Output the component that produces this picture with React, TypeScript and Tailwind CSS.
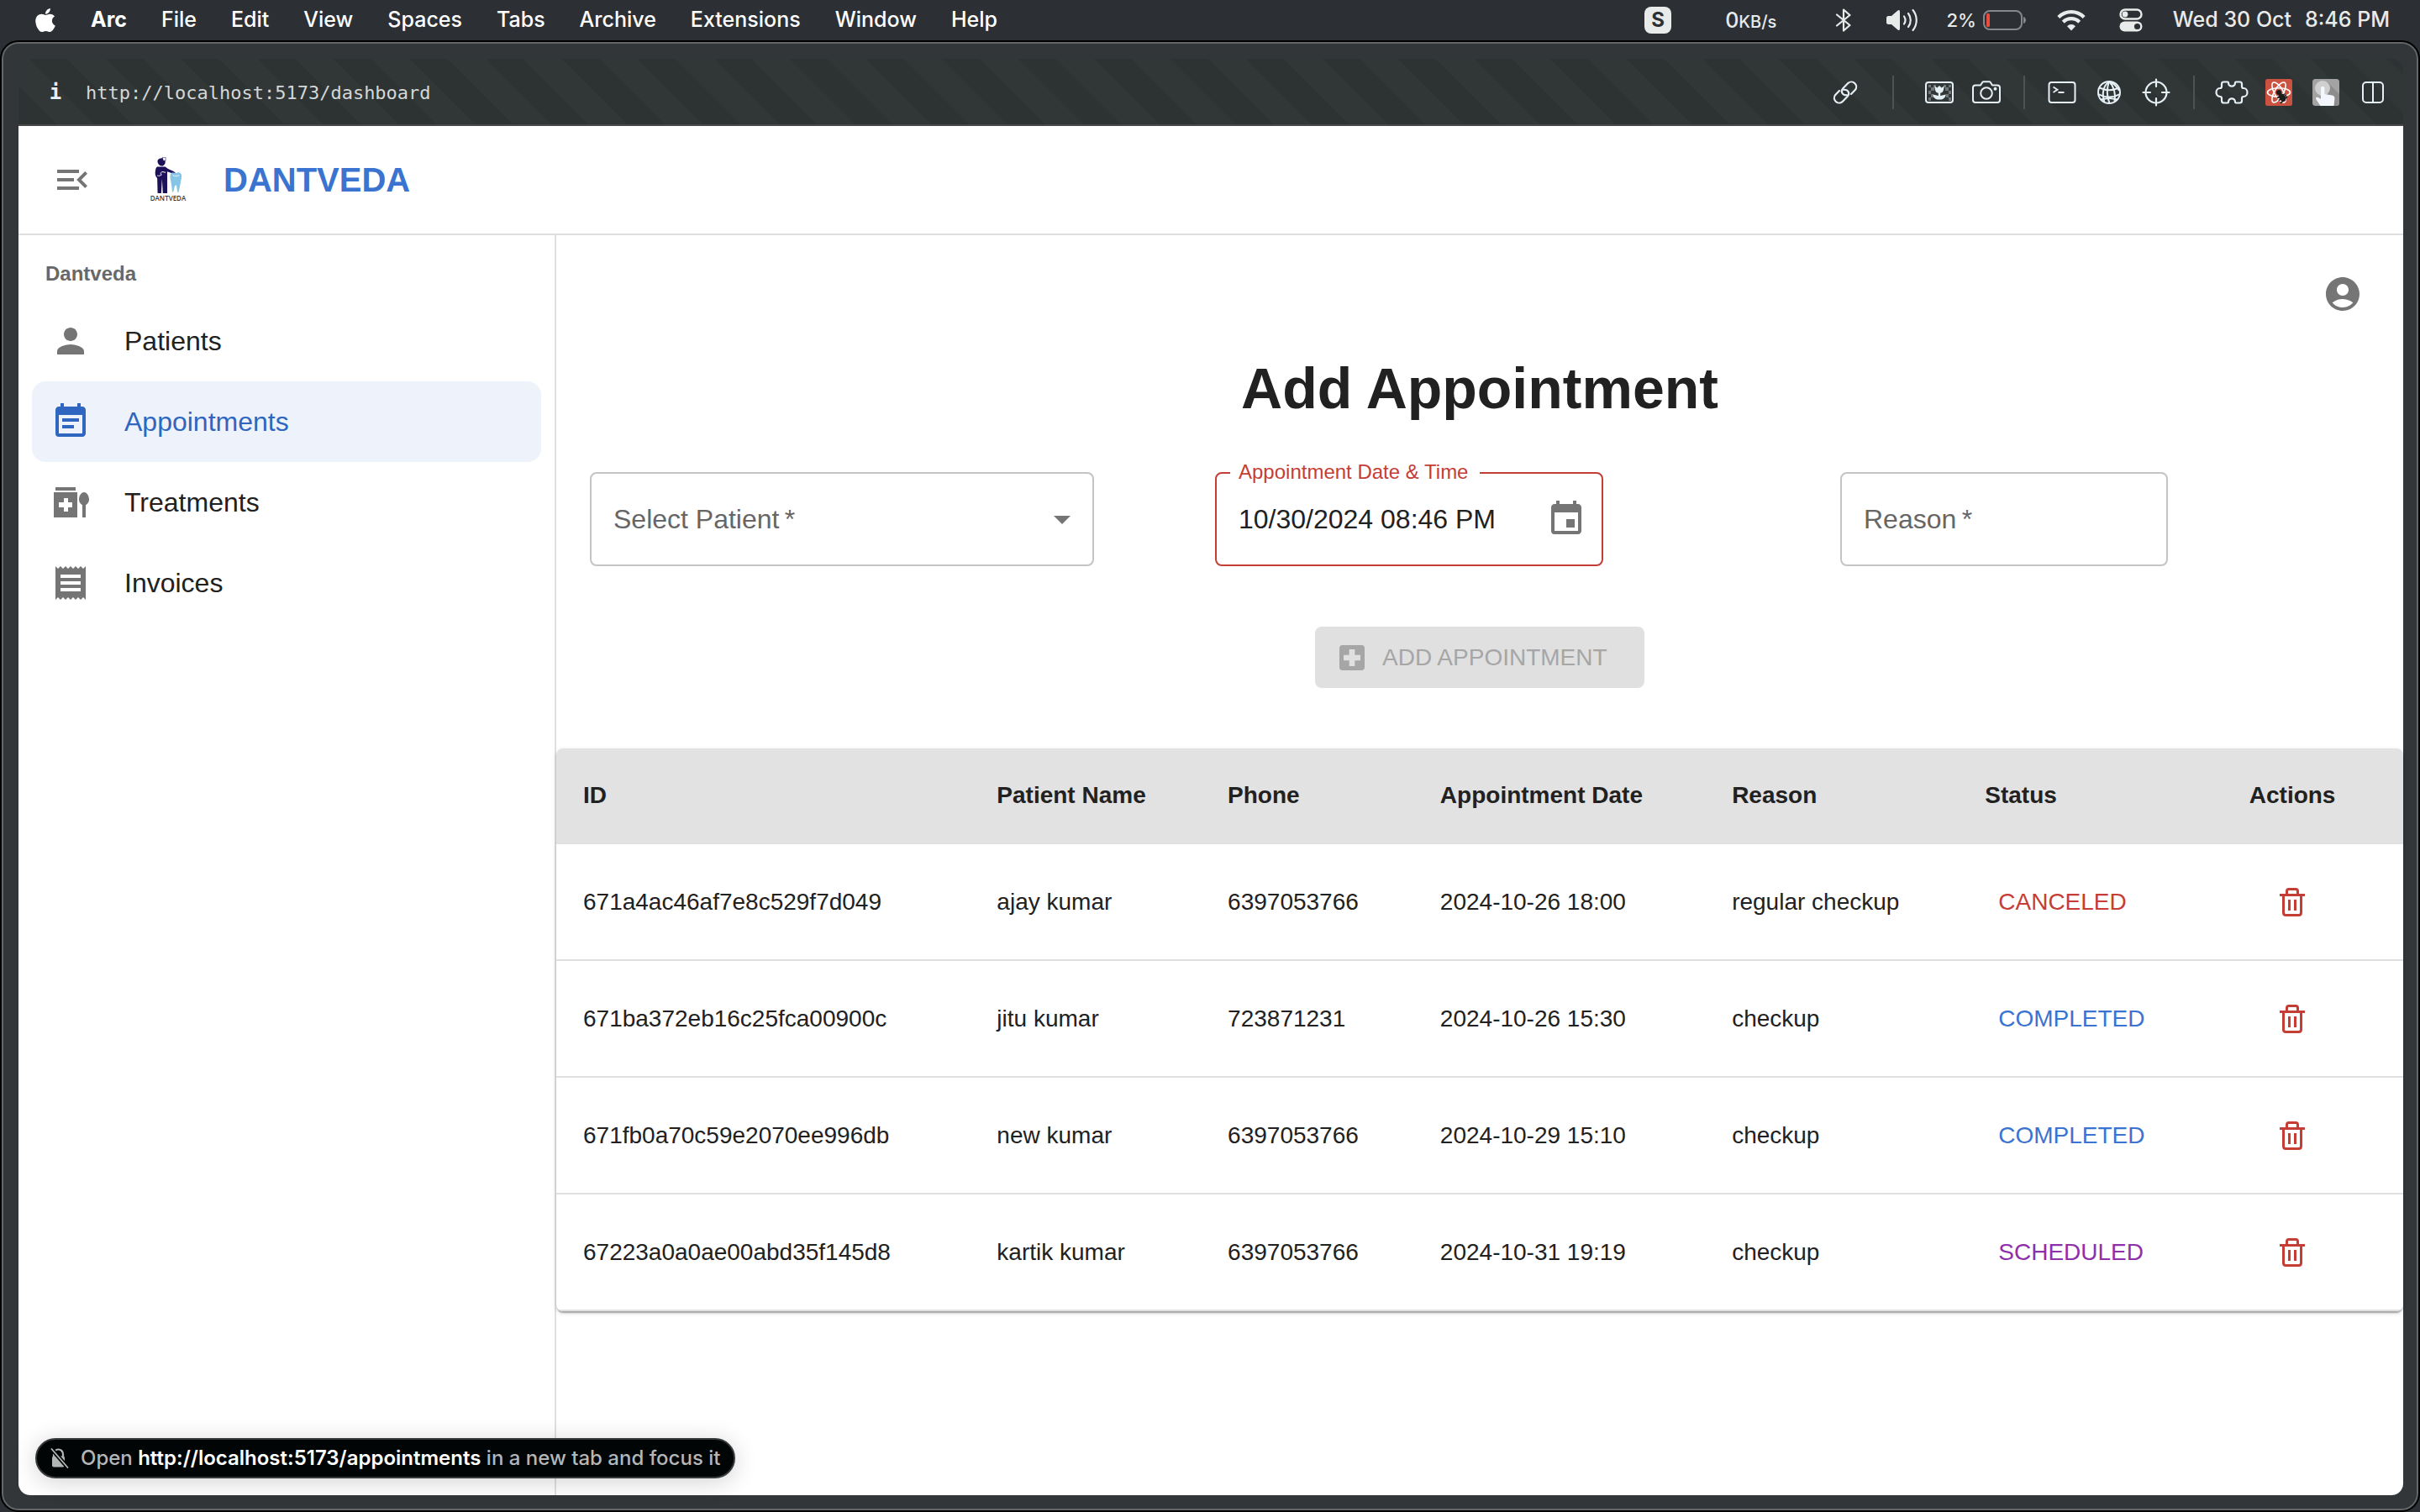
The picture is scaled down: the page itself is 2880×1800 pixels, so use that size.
import React from "react";
import { MdMenuOpen, MdPerson, MdEventNote, MdReceipt, MdEvent, MdAccountCircle, MdArrowDropDown, MdLocalHospital } from "react-icons/md";
import { FaApple } from "react-icons/fa";

const menus = ["File", "Edit", "View", "Spaces", "Tabs", "Archive", "Extensions", "Window", "Help"];

type Status = "CANCELED" | "COMPLETED" | "SCHEDULED";

const statusColor: Record<Status, string> = {
  CANCELED: "text-[#c43e36]",
  COMPLETED: "text-[#3a74d0]",
  SCHEDULED: "text-[#8e30ac]",
};

const rows: { id: string; name: string; phone: string; date: string; reason: string; status: Status }[] = [
  { id: "671a4ac46af7e8c529f7d049", name: "ajay kumar", phone: "6397053766", date: "2024-10-26 18:00", reason: "regular checkup", status: "CANCELED" },
  { id: "671ba372eb16c25fca00900c", name: "jitu kumar", phone: "723871231", date: "2024-10-26 15:30", reason: "checkup", status: "COMPLETED" },
  { id: "671fb0a70c59e2070ee996db", name: "new kumar", phone: "6397053766", date: "2024-10-29 15:10", reason: "checkup", status: "COMPLETED" },
  { id: "67223a0a0ae00abd35f145d8", name: "kartik kumar", phone: "6397053766", date: "2024-10-31 19:19", reason: "checkup", status: "SCHEDULED" },
];

function BluetoothIcon() {
  return (
    <svg width="20" height="30" viewBox="0 0 20 30" fill="none" stroke="currentColor" strokeWidth="2.2" strokeLinejoin="round" strokeLinecap="round" aria-hidden="true">
      <path d="M2 8.5 17.5 21 10 27.5V2.5L17.5 9 2 21.5" />
    </svg>
  );
}

function VolumeIcon() {
  return (
    <svg width="40" height="28" viewBox="0 0 40 28" aria-hidden="true">
      <path d="M1 11.5Q1 9 3.500 9H7L14.500 2.600Q17 1 17 4V24Q17 27 14.500 25.400L7 19H3.500Q1 19 1 16.500Z" fill="currentColor" />
      <g fill="none" stroke="currentColor" strokeWidth="2.2" strokeLinecap="round">
        <path d="M22 9.500a8 8 0 0 1 0 9" />
        <path d="M27 6a13 13 0 0 1 0 16" />
        <path d="M32.500 2a19 19 0 0 1 0 24" />
      </g>
    </svg>
  );
}

function BatteryIcon() {
  return (
    <svg width="52" height="24" viewBox="0 0 52 24" aria-hidden="true">
      <rect x="1" y="1" width="45" height="22" rx="7" fill="none" stroke="#85888b" strokeWidth="2" />
      <rect x="4" y="4" width="4" height="16" rx="1.500" fill="#ea4b3d" />
      <path d="M48 8c4 1 4 7 0 8z" fill="#85888b" />
    </svg>
  );
}

function WifiIcon() {
  return (
    <svg width="34" height="26" viewBox="0 0 34 26" aria-hidden="true">
      <g fill="none" stroke="currentColor" strokeWidth="4.200">
        <path d="M1.800 9.500a21.500 21.500 0 0 1 30.400 0" />
        <path d="M7.300 15.200a13.700 13.700 0 0 1 19.400 0" />
      </g>
      <path d="M17 25.500l-5-5.300a7 7 0 0 1 10 0z" fill="currentColor" />
    </svg>
  );
}

function ControlCenterIcon() {
  return (
    <svg width="28" height="28" viewBox="0 0 28 28" aria-hidden="true">
      <rect x="1.500" y="1.500" width="25" height="11" rx="5.500" fill="none" stroke="currentColor" strokeWidth="2.400" />
      <circle cx="7" cy="7" r="3.400" fill="currentColor" />
      <rect x="0.500" y="15.500" width="27" height="12" rx="6" fill="currentColor" />
      <circle cx="21.500" cy="21.500" r="3.600" fill="#2c3034" />
    </svg>
  );
}

function LinkIcon() {
  return (
    <svg width="32" height="32" viewBox="0 0 32 32" fill="none" stroke="currentColor" strokeWidth="2.200" strokeLinecap="round" aria-hidden="true">
      <path d="M17.800 19.200C12.500 19.600 10 14.800 13.300 11.200L19.500 4.800a5.900 5.900 0 0 1 8.300 8.300L23 18" />
      <path d="M14.200 12.800C19.500 12.400 22 17.200 18.700 20.800L12.500 27.200a5.900 5.900 0 0 1-8.300-8.300L9 14" />
    </svg>
  );
}

function CaptureIcon() {
  return (
    <svg width="34" height="28" viewBox="0 0 34 28" aria-hidden="true">
      <rect x="1" y="2" width="32" height="24" rx="3" fill="none" stroke="currentColor" strokeWidth="2" />
      <g fill="currentColor" opacity=".35">
        <path d="M4 5h3v3H4zM10 5h3v3h-3zM22 5h3v3h-3zM7 8h4v4H7zM24 8h4v4h-4zM4 12h3v4H4zM28 12h3v4h-3zM7 16h3v4H7zM25 16h3v4h-3zM4 20h3v4H4zM28 20h3v4h-3zM28 5h3v3h-3z" />
      </g>
      <path d="M11.500 6.500l2.800 2 2.700-2.500 2.700 2.500 2.800-2c0 4.500-1 7.800-4.300 8.300V18l6.500-1.500c-.5 4-3.500 6-6.700 6h-2c-3.200 0-6.200-2-6.700-6L15.800 18v-3.200c-3.300-.5-4.300-3.800-4.300-8.300z" fill="currentColor" />
    </svg>
  );
}

function CameraIcon() {
  return (
    <svg width="34" height="28" viewBox="0 0 34 28" fill="none" stroke="currentColor" strokeWidth="2" strokeLinejoin="round" aria-hidden="true">
      <path d="M4 5.500h6l2.200-3.500q.5-.8 1.500-.8h6.600q1 0 1.500.8L24 5.500h6q3 0 3 3V23q0 3-3 3H4q-3 0-3-3V8.500q0-3 3-3z" />
      <circle cx="17" cy="15" r="6.800" />
      <circle cx="27.500" cy="9.800" r="1" fill="currentColor" />
    </svg>
  );
}

function TerminalIcon() {
  return (
    <svg width="34" height="28" viewBox="0 0 34 28" fill="none" stroke="currentColor" strokeWidth="2" aria-hidden="true">
      <rect x="1.500" y="2" width="31" height="24" rx="3" />
      <path d="M6.500 7.500l5 3.200-5 3.200M12.500 14h7" strokeWidth="1.800" />
    </svg>
  );
}

function GlobeIcon() {
  return (
    <svg width="30" height="30" viewBox="0 0 30 30" fill="none" stroke="currentColor" strokeWidth="2" aria-hidden="true">
      <circle cx="15" cy="15" r="13" />
      <path d="M15 2C8 7 6 17 9.500 26.500M15 2c-3 8-2.500 18 .5 26M15 2c6 6 8 14 6.500 24M15 2c7 2 10 8 12 11" />
      <path d="M3.500 9.500c8 3.500 16 3.500 23 0M2 17c8 4.500 18 4.500 26 0M5.500 23.500c6-2 13-2 19 0" />
    </svg>
  );
}

function CrosshairIcon() {
  return (
    <svg width="34" height="34" viewBox="0 0 34 34" fill="none" stroke="currentColor" strokeWidth="2.200" strokeLinecap="round" aria-hidden="true">
      <circle cx="17" cy="17" r="12.500" />
      <path d="M17 1.500v8.500M17 24v8.500M1.500 17H10M24 17h8.500" />
    </svg>
  );
}

function PuzzleIcon() {
  return (
    <svg width="40" height="28" viewBox="0 0 40 28" fill="none" stroke="currentColor" strokeWidth="2.200" strokeLinejoin="round" aria-hidden="true">
      <path d="M10.500 1.500H15q1 0 1 1c0 5.500 8 5.500 8 0q0-1 1-1h4.500Q32 1.500 32 4v3q0 2 2 2c6 0 6 10 0 10q-2 0-2 2v3q0 2.500-2.500 2.500H25q-1 0-1-1c0-5.500-8-5.500-8 0q0 1-1 1h-4.500Q8 26.500 8 24v-3q0-2-2-2C0 19 0 9 6 9q2 0 2-2V4q0-2.500 2.500-2.500z" />
    </svg>
  );
}

function ReactDevIcon() {
  return (
    <svg width="32" height="32" viewBox="0 0 32 32" aria-hidden="true">
      <rect width="32" height="32" rx="2.500" fill="#cb5140" />
      <g fill="none" stroke="#fff" strokeWidth="1.600">
        <ellipse cx="16" cy="16" rx="13.500" ry="5.200" />
        <ellipse cx="16" cy="16" rx="13.500" ry="5.200" transform="rotate(60 16 16)" />
        <ellipse cx="16" cy="16" rx="13.500" ry="5.200" transform="rotate(120 16 16)" />
      </g>
      <circle cx="16" cy="16" r="3" fill="#1c1c1c" />
      <g transform="rotate(-35 20 22)">
        <ellipse cx="20" cy="22" rx="3.500" ry="5.500" fill="#1c1c1c" />
        <path d="M14.500 19l11 1.500M14.500 22.500h11M14.500 26.500l11-2" stroke="#1c1c1c" strokeWidth="1.600" />
      </g>
    </svg>
  );
}

function TouchIcon() {
  return (
    <svg width="32" height="32" viewBox="0 0 32 32" aria-hidden="true">
      <rect width="32" height="32" rx="3.500" fill="#a3a3a3" />
      <path d="M18 4l14 14v10q0 4-4 4H14z" fill="#8d8d8d" />
      <circle cx="12" cy="11" r="9" fill="#cfcfcf" />
      <path d="M10 11q0-2.200 2.200-2.200T14.400 11v7l9 1.600q3.400.6 3 4L25.500 32H9.500l-5-7.600q-1.300-2.400 1-2.600 1.500 0 4.500 2.200z" fill="#f3f7fd" />
    </svg>
  );
}

function SplitIcon() {
  return (
    <svg width="26" height="28" viewBox="0 0 26 28" fill="none" stroke="currentColor" strokeWidth="2" aria-hidden="true">
      <rect x="1" y="2" width="24" height="24" rx="4" />
      <path d="M13 2v24" />
    </svg>
  );
}

function TreatmentsIcon() {
  return (
    <svg width="48" height="48" viewBox="0 0 24 24" fill="currentColor" aria-hidden="true">
      <path d="M3 3h12v2H3z" />
      <path fillRule="evenodd" d="M2 6h14v15H2zM8 9.500V12H5v3h3v2.500h2.500V15h2.500v-3h-2.500V9.500z" />
      <path d="M23 10.200C23 8.400 21.800 6 20 6s-3 2.400-3 4.200c0 1.500.8 2.700 2 3.400V21h2v-7.400c1.200-.7 2-1.900 2-3.400z" />
    </svg>
  );
}

function TrashIcon() {
  return (
    <svg width="30" height="34" viewBox="0 0 30 34" fill="none" stroke="currentColor" strokeWidth="3" aria-hidden="true">
      <path d="M8.500 7V4q0-2.500 2.500-2.500h8q2.500 0 2.500 2.500v3" />
      <path d="M0 8.500h30" />
      <path d="M4.500 9v20.500q0 3 3 3h15q3 0 3-3V9" />
      <path d="M11.500 14v13M18.500 14v13" />
    </svg>
  );
}

function LogoMark() {
  return (
    <svg width="42" height="44" viewBox="0 0 44 46" aria-hidden="true">
      <g fill="#1d1259">
        <path d="M9 6.500C8.500 3 10.500 1.500 13.500 1.500L15 .8l1.500 1.700c2 1 2.500 3 1.800 5.200-.6 2-2.400 3.300-4.300 3.300s-4.400-1.700-5-4.500z" />
        <path d="M8.500 12h10l3.500 2.600 7 3.200 2.500 2-1.500 1.300-9-3.200V45H15.500l-1-18-1 18H9l-.5-18.500C6 24 5.500 20 6.300 16.500 6.800 14 7 12.800 8.500 12z" />
      </g>
      <path d="M8.500 23c2 .8 4 .2 5.500-1.200l-1.500-1.300 2-2.300 4.500 1" fill="none" stroke="#fff" strokeWidth="1" />
      <path d="M15 .2h4v4.300h-3z" fill="#fff" stroke="#1d1259" strokeWidth=".6" />
      <path d="M26 20c2-1.300 4 0 5.500 0s4-1.800 6 0c2.300 2 1.500 6 .5 9.500-.8 5-1.800 10-3 14.500-1.200.8-1.500-1.500-1.800-4-.2-3-.6-5-1.600-5s-1.600 2-2.200 5c-.5 2.500-1 4.500-2.200 3.500-.6-5-.8-9.500-1.700-13.500-1-4-1.500-8 .5-10z" fill="#86c5e5" />
      <path d="M28 22.500c1.500 1.300 6 1.500 8 0" fill="none" stroke="#fff" strokeWidth=".9" />
    </svg>
  );
}

function UnsecuredIcon() {
  return (
    <svg width="22" height="24" viewBox="0 0 22 24" aria-hidden="true">
      <path d="M4 10V7a5.500 5.500 0 0 1 11 0v3" fill="none" stroke="currentColor" strokeWidth="2.200" />
      <rect x="2" y="9.500" width="15" height="13" rx="2" fill="currentColor" />
      <path d="M1.500 1l19 22" stroke="#020506" strokeWidth="5" />
      <path d="M1.500 1l19 22" stroke="currentColor" strokeWidth="1.800" strokeLinecap="round" />
    </svg>
  );
}

function ToolButton({ label, children }: { label: string; children: React.ReactNode }) {
  return (
    <button type="button" aria-label={label} className="flex h-14 w-14 items-center justify-center">
      {children}
    </button>
  );
}

function Divider() {
  return <span className="mx-4 h-10 w-0.5 bg-[#4d5254]" />;
}

function MenuBar() {
  return (
    <header className="flex h-[50px] shrink-0 items-center bg-[#2c3034] pl-10 pr-9 pb-0.5 font-['Inter',sans-serif] text-[25px] leading-8 text-white">
      <button type="button" aria-label="Apple menu" className="mr-10 flex">
        <FaApple className="h-8 w-7" />
      </button>
      <nav className="flex items-center gap-x-[41px] pb-0.5">
        <button type="button" className="font-bold">Arc</button>
        {menus.map((m) => (
          <button key={m} type="button" className="font-medium">{m}</button>
        ))}
      </nav>
      <div className="ml-auto flex items-center text-[#e9eaea]">
        <span className="flex h-8 w-8 items-center justify-center rounded-lg bg-[#e9eaea] text-2xl font-bold text-[#2c3034]">S</span>
        <span className="ml-16 font-medium">0<span className="text-xl">KB/s</span></span>
        <span className="ml-[70px]"><BluetoothIcon /></span>
        <span className="ml-10"><VolumeIcon /></span>
        <span className="ml-8 text-[22px] font-medium">2%</span>
        <span className="ml-2"><BatteryIcon /></span>
        <span className="ml-9"><WifiIcon /></span>
        <span className="ml-10"><ControlCenterIcon /></span>
        <span className="ml-9 pb-0.5 font-medium">Wed 30 Oct</span>
        <span className="ml-4 pb-0.5 font-medium">8:46 PM</span>
      </div>
    </header>
  );
}

function Toolbar() {
  return (
    <div className="flex h-20 shrink-0 items-center rounded-t-[14px] border-b-2 border-[#454949] bg-[repeating-linear-gradient(45deg,#2d3232_0,#2d3232_32px,#313636_32px,#313636_64px)] pl-9 pr-2 pt-0.5 font-['DejaVu_Sans_Mono',monospace] text-[22px] text-[#d3d7d8]">
      <button type="button" aria-label="Site information" className="w-4 text-2xl font-bold text-[#e4f0f5]">i</button>
      <span className="ml-7">http://localhost:5173/dashboard</span>
      <div className="ml-auto flex items-center text-[#e4f0f5]">
        <ToolButton label="Copy link"><LinkIcon /></ToolButton>
        <span className="w-3" />
        <Divider />
        <span className="w-2.5" />
        <ToolButton label="Capture"><CaptureIcon /></ToolButton>
        <ToolButton label="Camera"><CameraIcon /></ToolButton>
        <Divider />
        <ToolButton label="Console"><TerminalIcon /></ToolButton>
        <ToolButton label="Network"><GlobeIcon /></ToolButton>
        <ToolButton label="Inspect"><CrosshairIcon /></ToolButton>
        <Divider />
        <ToolButton label="Extensions"><PuzzleIcon /></ToolButton>
        <ToolButton label="React developer tools"><ReactDevIcon /></ToolButton>
        <ToolButton label="Touch"><TouchIcon /></ToolButton>
        <ToolButton label="Split view"><SplitIcon /></ToolButton>
      </div>
    </div>
  );
}

const navItems = [
  { label: "Patients", icon: <MdPerson className="h-12 w-12" />, active: false },
  { label: "Appointments", icon: <MdEventNote className="h-12 w-12" />, active: true },
  { label: "Treatments", icon: <TreatmentsIcon />, active: false },
  { label: "Invoices", icon: <MdReceipt className="h-12 w-12" />, active: false },
];

function Sidebar() {
  return (
    <aside className="w-[640px] shrink-0 border-r-2 border-[#e0e0e0] px-4">
      <h2 className="flex h-[78px] items-center pl-4 pt-3.5 text-2xl font-bold text-[#686868]">Dantveda</h2>
      <nav>
        {navItems.map((n) => (
          <a
            key={n.label}
            href="#"
            className={
              n.active
                ? "flex h-24 items-center gap-10 rounded-2xl bg-[#eef3fb] pl-[22px] text-[32px] text-[#2f66c0]"
                : "flex h-24 items-center gap-10 rounded-2xl pl-[22px] text-[32px] text-[#212121]"
            }
          >
            <span className={n.active ? "text-[#2f66c0]" : "text-[#757575]"}>{n.icon}</span>
            {n.label}
          </a>
        ))}
      </nav>
    </aside>
  );
}

function AppointmentForm() {
  return (
    <form className="flex flex-col items-center px-10">
      <h1 className="mt-[46px] text-[68px] font-bold leading-[84px] text-[#212121]">Add Appointment</h1>
      <div className="mt-[58px] grid w-full grid-cols-3 gap-x-[114px] text-[32px]">
        <div className="relative h-28 w-[600px]">
          <select id="patient" defaultValue="" className="h-full w-full appearance-none rounded-lg border-2 border-[#c4c4c4] bg-transparent px-7 text-[#212121]">
            <option value="" />
          </select>
          <label htmlFor="patient" className="pointer-events-none absolute inset-y-0 left-7 flex items-center text-[#666666]">
            Select Patient&thinsp;*
          </label>
          <MdArrowDropDown className="pointer-events-none absolute inset-y-0 right-3.5 my-auto h-12 w-12 text-[#757575]" />
        </div>
        <div className="relative flex h-28 w-[462px] items-center rounded-lg border-2 border-[#c43e36] pl-[26px] pr-[18px]">
          <label htmlFor="date" className="absolute -top-[18px] left-4 whitespace-nowrap bg-white pl-2.5 pr-3.5 text-2xl text-[#c43e36]">
            Appointment Date &amp; Time
          </label>
          <input id="date" type="text" defaultValue="10/30/2024 08:46 PM" className="min-w-0 flex-1 bg-transparent text-[#212121] outline-none" />
          <button type="button" aria-label="Choose date" className="text-[#757575]">
            <MdEvent className="h-12 w-12" />
          </button>
        </div>
        <div className="relative h-28 w-[390px]">
          <input id="reason" type="text" className="h-full w-full rounded-lg border-2 border-[#c4c4c4] bg-transparent px-7 text-[#212121]" />
          <label htmlFor="reason" className="pointer-events-none absolute inset-y-0 left-7 flex items-center text-[#666666]">
            Reason&thinsp;*
          </label>
        </div>
      </div>
      <button type="button" disabled className="mt-[72px] flex h-[73px] w-[392px] items-center gap-4 rounded-lg bg-[#e0e0e0] pl-6 text-[28px] text-[#a6a6a6]">
        <MdLocalHospital className="h-10 w-10" />
        ADD APPOINTMENT
      </button>
    </form>
  );
}

function AppointmentTable() {
  return (
    <div className="mt-[72px] overflow-hidden rounded-lg shadow-[0_4px_2px_-2px_rgba(0,0,0,0.2),0_2px_2px_0_rgba(0,0,0,0.14),0_2px_6px_0_rgba(0,0,0,0.12)]">
      <table className="w-full table-fixed border-collapse text-left text-[28px] text-[#212121]">
        <colgroup>
          <col className="w-[22.4%]" />
          <col className="w-[12.5%]" />
          <col className="w-[11.5%]" />
          <col className="w-[15.8%]" />
          <col className="w-[13.7%]" />
          <col className="w-[12.1%]" />
          <col className="w-[12%]" />
        </colgroup>
        <thead>
          <tr className="h-[113px] border-b-2 border-[#e0e0e0] bg-[#e2e2e2]">
            {["ID", "Patient Name", "Phone", "Appointment Date", "Reason", "Status"].map((h) => (
              <th key={h} scope="col" className="whitespace-nowrap pl-8 font-bold">{h}</th>
            ))}
            <th scope="col" className="text-center font-bold">Actions</th>
          </tr>
        </thead>
        <tbody>
          {rows.map((r) => (
            <tr key={r.id} className="h-[139px] border-b-2 border-[#e0e0e0]">
              <td className="pl-8">{r.id}</td>
              <td className="pl-8">{r.name}</td>
              <td className="pl-8">{r.phone}</td>
              <td className="pl-8">{r.date}</td>
              <td className="pl-8">{r.reason}</td>
              <td className="pl-8">
                <button type="button" className={statusColor[r.status] + " px-4 py-3"}>{r.status}</button>
              </td>
              <td className="text-center">
                <button type="button" aria-label="Delete appointment" className="inline-flex p-3 align-middle text-[#c43e36]">
                  <TrashIcon />
                </button>
              </td>
            </tr>
          ))}
        </tbody>
      </table>
    </div>
  );
}

export default function App() {
  return (
    <div className="flex h-screen flex-col bg-[#2c3034]">
      <MenuBar />
      <div className="flex min-h-0 flex-1 px-0.5 pb-0.5">
        <div className="flex min-w-0 flex-1 flex-col rounded-[20px] border-2 border-[#626668] bg-[#323638] pb-4 pl-[18px] pr-4 pt-[18px] outline-2 outline-black">
          <Toolbar />
          <div className="relative flex min-h-0 flex-1 flex-col rounded-b-[14px] bg-white font-['Liberation_Sans',Arial,sans-serif]">
            <header className="flex h-[130px] shrink-0 items-center border-b-2 border-[#e0e0e0] pl-10">
              <button type="button" aria-label="Collapse menu" className="text-[#757575]">
                <MdMenuOpen className="h-12 w-12" />
              </button>
              <div className="ml-[66px] flex w-12 flex-col items-center">
                <LogoMark />
                <span className="font-['Open_Sans',sans-serif] text-[8px] font-semibold leading-[10px] text-[#3b3b3b]">DANTVEDA</span>
              </div>
              <span className="ml-[42px] text-[40px] font-bold text-[#3a74d0]">DANTVEDA</span>
            </header>
            <div className="flex min-h-0 flex-1">
              <Sidebar />
              <main className="min-w-0 flex-1">
                <div className="flex justify-end pr-12 pt-[46px]">
                  <button type="button" aria-label="Account" className="text-[#757575]">
                    <MdAccountCircle className="h-12 w-12" />
                  </button>
                </div>
                <AppointmentForm />
                <AppointmentTable />
              </main>
            </div>
            <div className="absolute bottom-5 left-5 flex h-12 items-center gap-3.5 whitespace-nowrap rounded-full border-2 border-[#38393a] bg-[#020506] px-4 font-['Inter',sans-serif] text-2xl font-medium text-[#b4b6b6] shadow-[0_4px_28px_rgba(0,0,0,0.18)]">
              <UnsecuredIcon />
              <span>
                Open <span className="font-semibold text-white">http://localhost:5173/appointments</span> in a new tab and focus it
              </span>
            </div>
          </div>
        </div>
      </div>
    </div>
  );
}
